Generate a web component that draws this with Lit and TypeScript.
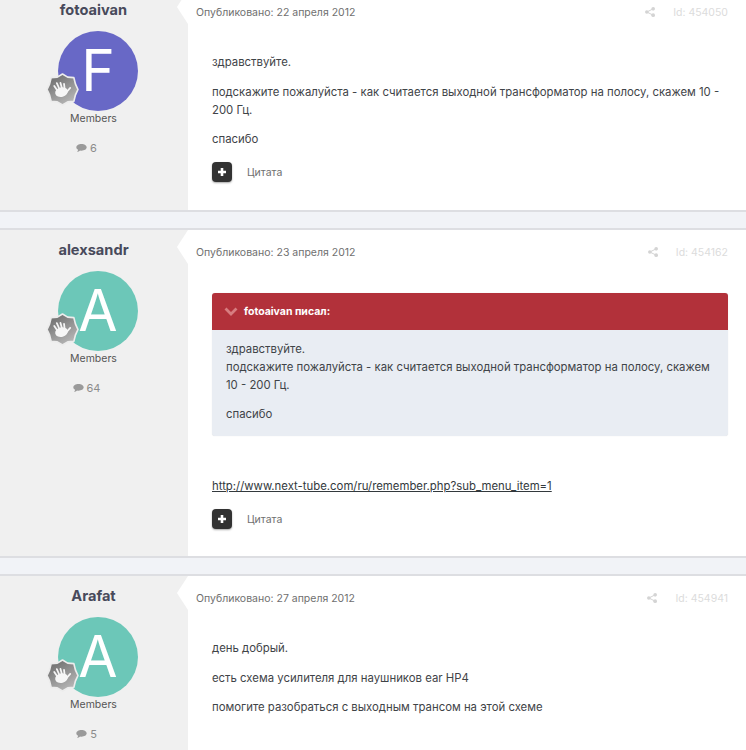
import { LitElement, html, css, svg } from "lit";
import { customElement } from "lit/decorators.js";

const hand = svg`<g stroke="#f6f6f6" stroke-linecap="round" stroke-width="1.7" fill="none">
<path d="M11 17 8 12.500M13 15.500 10.500 9.800M15.500 15 14 9.500M18 15 17.500 10.500M19 19.500 23.500 14.500"/>
</g><ellipse cx="15" cy="18.500" rx="6.200" ry="4.600" transform="rotate(-15 15 18.500)" fill="#f6f6f6"/>`;

const badge = html`<svg class="badge" viewBox="0 0 32 32" width="33" height="33">
<defs><linearGradient id="bg" x1="0.2" y1="0" x2="0.8" y2="1"><stop offset="0" stop-color="#6c6c6c"/><stop offset="1" stop-color="#bcbcbc"/></linearGradient></defs>
<polygon points="16,1 21,4 27,4.500 28.500,10.500 31,16 28.500,21.500 27,27.500 21,28 16,31 11,28 5,27.500 3.500,21.500 1,16 3.500,10.500 5,4.500 11,4" fill="url(#bg)" stroke="#ececec" stroke-width="1.600" stroke-linejoin="round"/>
${hand}
</svg>`;

const plus = html`<button class="plus" aria-label="+"><svg viewBox="0 0 10 10" width="10" height="10"><path d="M5 1v8M1 5h8" stroke="#fff" stroke-width="2.600"/></svg></button>`;

const share = html`<svg class="share" viewBox="0 0 12 12" width="10" height="10"><circle cx="9.800" cy="2.200" r="2.200"/><circle cx="9.800" cy="9.800" r="2.200"/><circle cx="2.200" cy="6" r="2.200"/><path d="M2.200 6 9.800 2.200M2.200 6l7.600 3.800" stroke="#d4d4d4" stroke-width="1.200"/></svg>`;

const bubble = html`<svg class="bubble" viewBox="0 0 14 12" width="11" height="10"><path d="M7 .8c3.600 0 6.600 1.900 6.600 4.300S10.600 9.400 7 9.400c-.6 0-1.200 0-1.700-.2C4.200 10.200 2.700 10.900 1.400 11c.7-.8 1.200-1.700 1.300-2.700C1.200 7.500.4 6.400.4 5.100.4 2.700 3.400.8 7 .8z"/></svg>`;

type Post = { name: string; letter: string; color: string; count: string; date: string; id: string };

@customElement("app-root")
export class AppRoot extends LitElement {
  static styles = css`
    :host { display: block; width: 746px; height: 750px; overflow: hidden; background: #f1f3f7; font-family: Inter, "Noto Sans", sans-serif; color: #353c41; }
    .list { display: flex; flex-direction: column; gap: 16px; margin-top: -10px; }
    .post { display: flex; box-sizing: border-box; background: #fff; border-top: 2px solid #dddee2; border-bottom: 2px solid #dddee2; }
    .post.first { border-top: 0; height: 222px; }
    .post.second { height: 330px; }
    .post.third { height: 200px; }
    .side { position: relative; width: 188px; flex: none; background: #f0f0f0; display: flex; flex-direction: column; align-items: center; padding: 9px 1px 0 0; box-sizing: border-box; }
    .side::after { content: ""; position: absolute; right: 0; top: 0; border-style: solid; border-width: 17px 11px 17px 0; border-color: transparent #fff transparent transparent; }
    .name { font-size: 14.600px; line-height: 22px; font-weight: 700; color: #484a5b; }
    .avatar { position: relative; width: 80px; height: 80px; margin: 10px 0 0 9px; border-radius: 50%; color: #fff; font-size: 57px; line-height: 79px; text-align: center; font-weight: 400; }
    .badge { position: absolute; left: -12px; top: 42px; }
    .role { font-size: 10.500px; line-height: 14px; margin-top: 1px; color: #555; }
    .count { display: flex; align-items: center; gap: 3px; font-size: 11px; line-height: 14px; margin: 14.500px 0 0 -14px; color: #8b8b8b; }
    .bubble { fill: #9a9a9a; }
    .main { flex: 1; min-width: 0; display: flex; flex-direction: column; padding: 0 18px 0 8px; }
    .meta { display: flex; align-items: center; height: 16px; margin-top: 14px; font-size: 10.500px; color: #6f6f6f; }
    .date { flex: 1; }
    .share { fill: #d4d4d4; margin-right: 18px; }
    .id { color: #dcdcdc; font-size: 10.500px; }
    .body { margin-top: 33px; padding-left: 16px; font-size: 11.360px; line-height: 18px; color: #3f4448; }
    .body p { margin: 0 0 11.500px; }
    .quote { margin-bottom: 41px; border-radius: 3px; background: #e9edf3; box-shadow: 0 0 1px rgba(0,0,0,.15); padding-bottom: 13px; }
    .qhead { display: flex; align-items: center; gap: 6px; height: 37px; padding: 0 12px; background: #b2313a; color: #fff; font-size: 10.500px; font-weight: 700; border-radius: 3px 3px 0 0; }
    .qhead svg { flex: none; }
    .qbody { padding: 10px 14px 0; }
    .qbody p { margin-bottom: 11px; }
    .qbody p:last-child { margin: 0; }
    a { color: #33393d; }
    .actions { display: flex; align-items: center; gap: 15px; margin-top: 2.500px; padding-left: 16px; font-size: 10.500px; color: #6f6f6f; }
    .plus { width: 20px; height: 20px; padding: 0; border: 0; border-radius: 4px; background: #323232; box-shadow: 0 1px 2px rgba(0,0,0,.35); display: flex; align-items: center; justify-content: center; }
  `;

  private side(p: Post) {
    return html`<div class="side">
      <div class="name">${p.name}</div>
      <div class="avatar" style="background:${p.color}">${p.letter}${badge}</div>
      <div class="role">Members</div>
      <div class="count">${bubble}<span>${p.count}</span></div>
    </div>`;
  }

  private meta(p: Post) {
    return html`<div class="meta"><span class="date">Опубликовано: ${p.date}</span>${share}<span class="id">Id: ${p.id}</span></div>`;
  }

  render() {
    const a: Post = { name: "fotoaivan", letter: "F", color: "#6868c6", count: "6", date: "22 апреля 2012", id: "454050" };
    const b: Post = { name: "alexsandr", letter: "A", color: "#6cc7b8", count: "64", date: "23 апреля 2012", id: "454162" };
    const c: Post = { name: "Arafat", letter: "A", color: "#6cc7b8", count: "5", date: "27 апреля 2012", id: "454941" };
    return html`<div class="list">
      <section class="post first">${this.side(a)}<div class="main">${this.meta(a)}
        <div class="body"><p>здравствуйте.</p><p>подскажите пожалуйста - как считается выходной трансформатор на полосу, скажем 10 - 200 Гц.</p><p>спасибо</p></div>
        <div class="actions">${plus}<span>Цитата</span></div></div></section>
      <section class="post second">${this.side(b)}<div class="main">${this.meta(b)}
        <div class="body"><div class="quote">
          <div class="qhead"><svg viewBox="0 0 14 9" width="14" height="9"><path d="M1.500 1.500 7 7l5.500-5.500" fill="none" stroke="#d77d80" stroke-width="2.800"/></svg>fotoaivan писал:</div>
          <div class="qbody"><p>здравствуйте.<br>подскажите пожалуйста - как считается выходной трансформатор на полосу, скажем 10 - 200 Гц.</p><p>спасибо</p></div>
        </div><p><a href="#">http://www.next-tube.com/ru/remember.php?sub_menu_item=1</a></p></div>
        <div class="actions">${plus}<span>Цитата</span></div></div></section>
      <section class="post third">${this.side(c)}<div class="main">${this.meta(c)}
        <div class="body"><p>день добрый.</p><p>есть схема усилителя для наушников ear HP4</p><p>помогите разобраться с выходным трансом на этой схеме</p></div></div></section>
    </div>`;
  }
}
